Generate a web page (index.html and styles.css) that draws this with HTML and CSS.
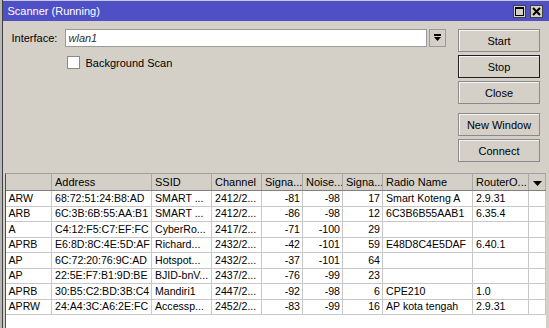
FILE: index.html
```html
<!DOCTYPE html>
<html lang="en">
<head>
    <meta charset="UTF-8">
    <title>Scanner (Running)</title>
    <link rel="stylesheet" href="styles.css">
</head>
<body>

<div class="screen">
    <!-- edge of the window behind -->
    <div class="behind"></div>

    <div class="window">
        <div class="titlebar">
            <span class="title">Scanner (Running)</span>
            <div class="wm-buttons">
                <span class="wm-btn">
                    <svg width="9" height="9" viewBox="0 0 9 9"><rect x="0.5" y="0.5" width="8" height="8" fill="none" stroke="#000"/><line x1="0" y1="1.5" x2="9" y2="1.5" stroke="#000"/></svg>
                </span>
                <span class="wm-btn">
                    <svg width="9" height="9" viewBox="0 0 9 9"><path d="M1 1 L8 8 M8 1 L1 8" stroke="#000" stroke-width="2"/></svg>
                </span>
            </div>
        </div>

        <div class="window-body">
            <div class="top">
                <div class="form">
                    <div class="field-row">
                        <label class="field-label">Interface:</label>
                        <div class="combo">wlan1</div>
                        <span class="combo-btn">
                            <svg width="9" height="8" viewBox="0 0 9 8"><rect x="1" y="0" width="7" height="2" fill="#000"/><path d="M1 3 H8 L4.5 7 Z" fill="#000"/></svg>
                        </span>
                    </div>
                    <div class="check-row">
                        <span class="checkbox"></span>
                        <span>Background Scan</span>
                    </div>
                </div>

                <div class="actions">
                    <button class="btn">Start</button>
                    <button class="btn btn-default">Stop</button>
                    <button class="btn">Close</button>
                    <button class="btn btn-gap">New Window</button>
                    <button class="btn">Connect</button>
                </div>
            </div>

            <div class="table-panel">
                <table class="grid">
                    <colgroup>
                        <col style="width:46px">
                        <col style="width:100px">
                        <col style="width:60px">
                        <col style="width:50px">
                        <col style="width:41px">
                        <col style="width:40px">
                        <col style="width:40px">
                        <col style="width:90px">
                        <col style="width:56px">
                        <col style="width:17px">
                    </colgroup>
                    <thead>
                        <tr>
                            <th></th>
                            <th>Address</th>
                            <th>SSID</th>
                            <th>Channel</th>
                            <th>Signa...</th>
                            <th>Noise...</th>
                            <th>Signa...</th>
                            <th>Radio Name</th>
                            <th>RouterO...</th>
                            <th class="menu-col">
                                <svg width="9" height="5" viewBox="0 0 9 5"><path d="M0 0 H9 L4.5 5 Z" fill="#000"/></svg>
                            </th>
                        </tr>
                    </thead>
                    <tbody>
                        <tr><td>ARW</td><td>68:72:51:24:B8:AD</td><td>SMART ...</td><td>2412/2...</td><td class="num">-81</td><td class="num">-98</td><td class="num">17</td><td>Smart Koteng A</td><td>2.9.31</td><td></td></tr>
                        <tr><td>ARB</td><td>6C:3B:6B:55:AA:B1</td><td>SMART ...</td><td>2412/2...</td><td class="num">-86</td><td class="num">-98</td><td class="num">12</td><td>6C3B6B55AAB1</td><td>6.35.4</td><td></td></tr>
                        <tr><td>A</td><td>C4:12:F5:C7:EF:FC</td><td>CyberRo...</td><td>2417/2...</td><td class="num">-71</td><td class="num">-100</td><td class="num">29</td><td></td><td></td><td></td></tr>
                        <tr><td>APRB</td><td>E6:8D:8C:4E:5D:AF</td><td>Richard...</td><td>2432/2...</td><td class="num">-42</td><td class="num">-101</td><td class="num">59</td><td>E48D8C4E5DAF</td><td>6.40.1</td><td></td></tr>
                        <tr><td>AP</td><td>6C:72:20:76:9C:AD</td><td>Hotspot...</td><td>2432/2...</td><td class="num">-37</td><td class="num">-101</td><td class="num">64</td><td></td><td></td><td></td></tr>
                        <tr><td>AP</td><td>22:5E:F7:B1:9D:BE</td><td>BJID-bnV...</td><td>2437/2...</td><td class="num">-76</td><td class="num">-99</td><td class="num">23</td><td></td><td></td><td></td></tr>
                        <tr><td>APRB</td><td>30:B5:C2:BD:3B:C4</td><td>Mandiri1</td><td>2447/2...</td><td class="num">-92</td><td class="num">-98</td><td class="num">6</td><td>CPE210</td><td>1.0</td><td></td></tr>
                        <tr><td>APRW</td><td>24:A4:3C:A6:2E:FC</td><td>Accessp...</td><td>2452/2...</td><td class="num">-83</td><td class="num">-99</td><td class="num">16</td><td>AP kota tengah</td><td>2.9.31</td><td></td></tr>
                    </tbody>
                </table>
            </div>
        </div>
    </div>
</div>

</body>
</html>
```

FILE: styles.css
```css
/* Classic window colours */
:root {
    --face: #d4d0c8;
    --title: #4f4fc6;
    --shadow: #808080;
    --grid-line: #c8c8c8;
}

body {
    margin: 0;
    font-family: "Liberation Sans", Arial, sans-serif;
    font-size: 11px;
    color: #000;
}

.screen {
    display: flex;
    width: 549px;
    height: 328px;
    overflow: hidden;
}

/* Window behind this one */
.behind {
    width: 2px;
    background-color: #b8b8b8;
    border-right: 1px solid #404040;
}

.window {
    flex: 1;
    display: flex;
    flex-direction: column;
    background-color: var(--face);
}

/* Title bar */
.titlebar {
    height: 20px;
    border-top: 1px solid #c8c8e8;
    background-color: var(--title);
    color: #fff;
    display: flex;
    align-items: center;
    padding-left: 5px;
    padding-right: 6px;
    font-size: 11px;
}

.title {
    flex: 1;
}

.wm-buttons {
    display: flex;
    gap: 4px;
}

.wm-btn {
    width: 11px;
    height: 11px;
    background-color: var(--face);
    border: 1px solid #404040;
    display: flex;
    align-items: center;
    justify-content: center;
}

/* Window body */
.window-body {
    flex: 1;
    display: flex;
    flex-direction: column;
    padding: 8px 3px 0 2px;
}

.top {
    display: flex;
    gap: 12px;
}

.form {
    flex: 1;
    margin-left: 7px;
}

.field-row {
    display: flex;
    align-items: center;
    height: 18px;
}

.field-label {
    width: 53px;
}

.combo {
    flex: 1;
    height: 16px;
    line-height: 16px;
    background-color: #fff;
    border: 1px solid #9a9a9a;
    padding-left: 3px;
    font-style: italic;
    color: #303030;
}

.combo-btn {
    width: 15px;
    height: 16px;
    margin-left: 2px;
    border: 1px solid #9a9a9a;
    background-color: var(--face);
    display: flex;
    align-items: center;
    justify-content: center;
}

.check-row {
    display: flex;
    align-items: center;
    gap: 6px;
    margin-top: 9px;
    margin-left: 55px;
}

.checkbox {
    width: 11px;
    height: 11px;
    background-color: #fff;
    border: 1px solid #8a8a8a;
}

/* Action buttons */
.actions {
    width: 82px;
    margin-right: 6px;
    display: flex;
    flex-direction: column;
    gap: 3px;
}

.btn {
    height: 23px;
    padding: 0;
    font-family: inherit;
    font-size: 11px;
    color: #000;
    background-color: var(--face);
    border: 1px solid #8a8a8a;
    box-shadow: inset 1px 1px 0 #f4f4f4;
}

.btn-default {
    border-color: #202020;
}

.btn-gap {
    margin-top: 6px;
}

/* Scan results table */
.table-panel {
    flex: 1;
    margin-top: 11px;
    background-color: #fff;
    border-left: 1px solid #505050;
    border-top: 1px solid #a0a0a0;
}

.grid {
    border-collapse: collapse;
    table-layout: fixed;
    width: 540px;
}

.grid th {
    height: 16px;
    padding: 0 3px;
    font-weight: normal;
    text-align: left;
    background-color: var(--face);
    border-right: 1px solid #a8a8a8;
    border-bottom: 1px solid var(--shadow);
    white-space: nowrap;
    overflow: hidden;
}

.grid th.menu-col {
    text-align: center;
    border-left: 1px solid #a8a8a8;
}

.grid tbody tr {
    height: 15.5px;
}

.grid td {
    padding: 0 1px 0 3px;
    line-height: 13px;
    font-size: 10.6px;
    border-right: 1px solid var(--grid-line);
    border-bottom: 1px solid var(--grid-line);
    white-space: nowrap;
    overflow: hidden;
}

.grid td.num {
    text-align: right;
    padding-right: 2px;
}
```
